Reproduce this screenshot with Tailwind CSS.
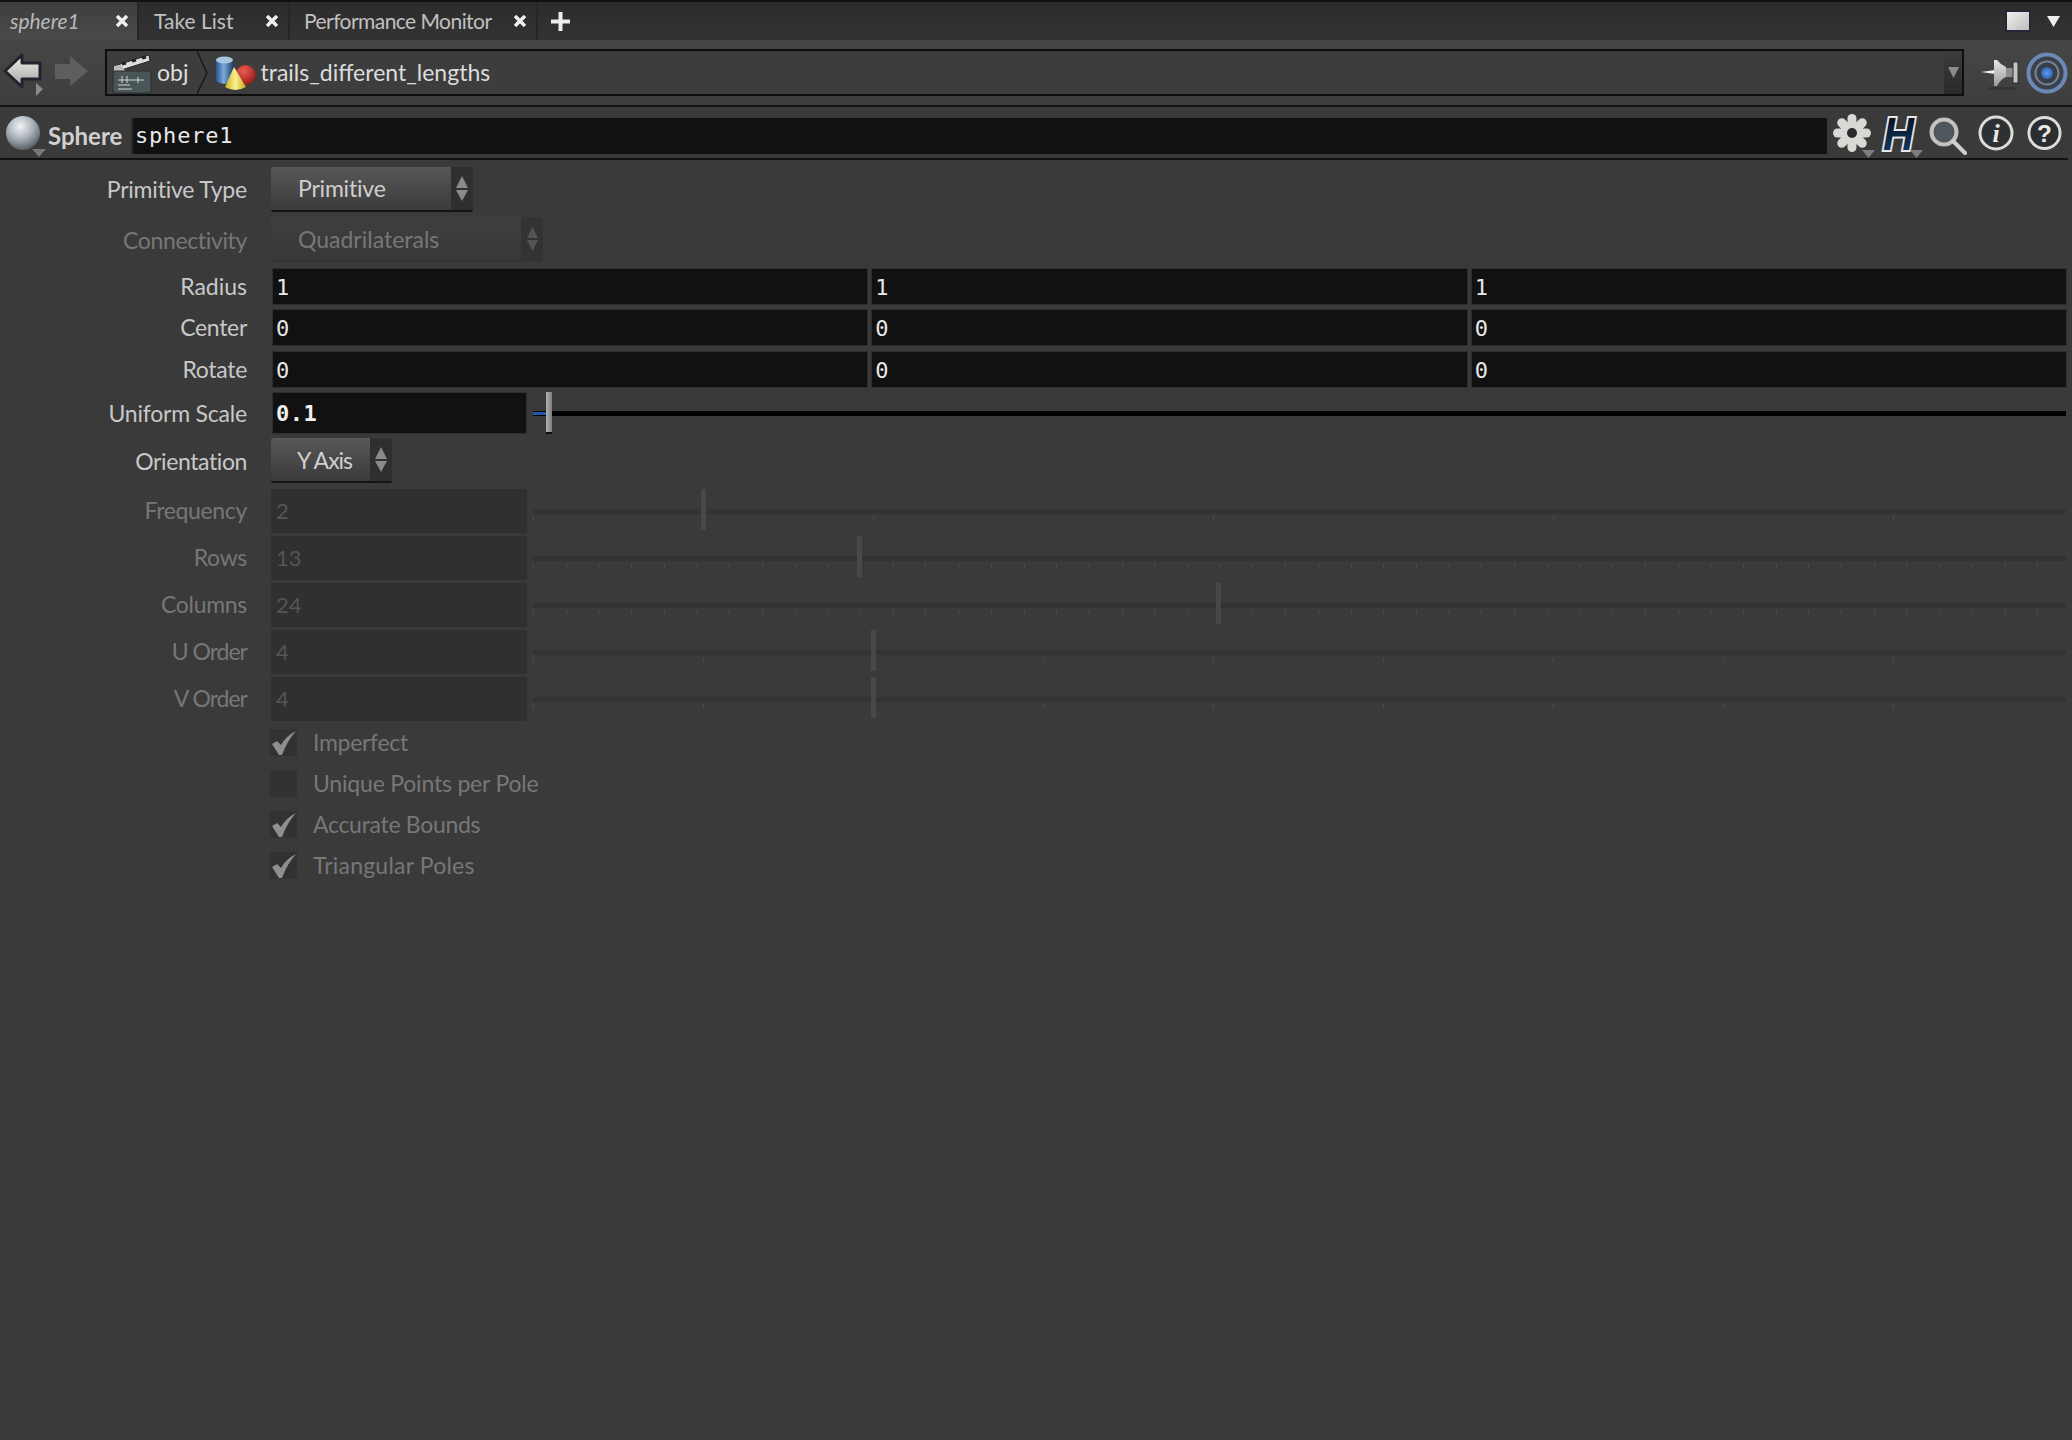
<!DOCTYPE html>
<html lang="en">
<head>
    <meta charset="UTF-8">
    <title>Sphere parameters</title>
    <script src="https://cdn.jsdelivr.net/npm/@tailwindcss/browser@4"></script>
</head>
<body class="bg-[#3a3a3a] text-[#cfcfcf] font-['Lato',sans-serif] text-[23px] h-[1440px] w-[2072px] overflow-hidden">

    <!-- Tabs -->
    <div class="h-[40px] bg-gradient-to-b from-[#2c2c2c] to-[#333] border-t-2 border-[#111] flex items-stretch">
        <div class="w-[139px] bg-gradient-to-b from-[#3e3e3e] to-[#4a4a4a] flex items-center justify-between pl-[10px] pr-[9px] border-r-2 border-[#262626]">
            <span class="italic text-[#b8b8b8] text-[21px]">sphere1</span>
            <svg width="12" height="12" viewBox="0 0 12 12"><path d="M1 1l10 10M11 1l-10 10" stroke="#eee" stroke-width="3.500"/></svg>
        </div>
        <div class="w-[151px] flex items-center justify-between pl-[15px] pr-[10px] border-r-2 border-[#262626]">
            <span class="text-[#c0c0c0] text-[21px]">Take List</span>
            <svg width="12" height="12" viewBox="0 0 12 12"><path d="M1 1l10 10M11 1l-10 10" stroke="#eee" stroke-width="3.500"/></svg>
        </div>
        <div class="w-[248px] flex items-center justify-between pl-[14px] pr-[10px] border-r-2 border-[#262626]">
            <span class="text-[#c0c0c0] text-[21px] tracking-[-0.55px] whitespace-nowrap">Performance Monitor</span>
            <svg width="12" height="12" viewBox="0 0 12 12"><path d="M1 1l10 10M11 1l-10 10" stroke="#eee" stroke-width="3.500"/></svg>
        </div>
        <div class="w-[44px] flex items-center justify-center">
            <svg width="19" height="19" viewBox="0 0 19 19"><path d="M9.500 0v19M0 9.500h19" stroke="#eee" stroke-width="4"/></svg>
        </div>
        <div class="flex-1 flex items-center justify-end pr-[12px] gap-[18px]">
            <div class="w-[22px] h-[18px] bg-gradient-to-br from-[#f0f0ee] to-[#bdbdbb] outline-2 outline-[#26263a]"></div>
            <svg width="13" height="11" viewBox="0 0 13 11"><path d="M0 0h13L6.500 11z" fill="#eee"/></svg>
        </div>
    </div>

    <!-- Path bar -->
    <div class="h-[67px] bg-gradient-to-b from-[#464646] to-[#3e3e3e] border-b-2 border-[#141414] flex items-center pl-[3px] pr-[4px]">
        <svg width="100" height="46" viewBox="0 0 100 46" class="shrink-0 mt-[4px]">
            <defs>
                <linearGradient id="back" x1="0" x2="0" y1="0" y2="1"><stop offset="0" stop-color="#f0f0ec"/><stop offset="1" stop-color="#a4a4a0"/></linearGradient>
            </defs>
            <path d="M2 19 L19 3 V11 H37 V27 H19 V35 Z" fill="url(#back)" stroke="#23232f" stroke-width="3" stroke-linejoin="round"/>
            <path d="M33 31 L40 37 L33 44 Z" fill="#8a8a8a"/>
            <path d="M52 12 H67 V4 L85 19 L67 34 V27 H52 Z" fill="#5e5e5e"/>
        </svg>
        <div class="w-[1859px] h-[47px] ml-[2px] border-2 border-[#0e0e0e] bg-[#3d3d3d] flex items-center shrink-0">
            <svg width="40" height="42" viewBox="0 0 40 42" class="ml-[5px] shrink-0">
                <path d="M2 14 L37 3 L38 9 L3 20 Z" fill="#ddd" stroke="#222"/>
                <path d="M10 12 L14 11 M20 9 L24 8 M30 6 L34 5" stroke="#222" stroke-width="3"/>
                <path d="M2 14 L9 13 L14 20 H2 Z" fill="#bbb"/>
                <rect x="1" y="19" width="38" height="22" rx="2" fill="#4a5557" stroke="#2a2e30"/>
                <path d="M6 28h26M6 33h12M6 37h14M10 24v7M15 24v7M26 25v6" stroke="#cfd5d5" stroke-width="1"/>
            </svg>
            <span class="ml-[5px] text-[#dcdcdc]">obj</span>
            <svg width="12" height="43" viewBox="0 0 12 43" class="ml-[9px] shrink-0">
                <path d="M0 0 L10 22 L0 43" fill="none" stroke="#191919" stroke-width="1.500"/>
            </svg>
            <svg width="40" height="34" viewBox="0 0 40 34" class="ml-[7px] shrink-0">
                <defs>
                    <linearGradient id="cyl" x1="0" x2="1" y1="0" y2="0"><stop offset="0" stop-color="#24568f"/><stop offset=".45" stop-color="#7ca9d8"/><stop offset="1" stop-color="#1d4270"/></linearGradient>
                    <radialGradient id="ball" cx=".4" cy=".3" r=".8"><stop offset="0" stop-color="#ee5c50"/><stop offset="1" stop-color="#8c1612"/></radialGradient>
                    <linearGradient id="cone" x1="0" x2="1" y1="0" y2="0"><stop offset="0" stop-color="#c9b21d"/><stop offset=".5" stop-color="#fbf090"/><stop offset="1" stop-color="#c7a91a"/></linearGradient>
                </defs>
                <path d="M0 4 Q8 -2 17 4 V25 Q8 31 0 25 Z" fill="url(#cyl)"/>
                <ellipse cx="8.500" cy="4" rx="8.500" ry="3.500" fill="#a8c5e2"/>
                <circle cx="29.500" cy="19" r="10" fill="url(#ball)"/>
                <path d="M18 11 L30 31 Q19 37 9 31 Z" fill="url(#cone)"/>
            </svg>
            <span class="ml-[4px] text-[#dcdcdc]">trails_different_lengths</span>
            <div class="ml-auto w-[18px] h-full bg-gradient-to-b from-[#3c3c3c] to-[#2a2a2a] flex items-center justify-center">
                <svg width="11" height="11" viewBox="0 0 11 11"><path d="M0 0h11L5.500 11z" fill="#8c8c8c"/></svg>
            </div>
        </div>
        <svg width="38" height="32" viewBox="0 0 38 32" class="ml-[17px] shrink-0 mt-[4px]">
            <defs><linearGradient id="pin" x1="0" x2="0" y1="0" y2="1"><stop offset="0" stop-color="#e4e4e2"/><stop offset="1" stop-color="#9c9c9a"/></linearGradient></defs>
            <path d="M0 13 L14 11 L14 15 Z" fill="#f0f0f0"/>
            <path d="M13 1 L16 1 Q20 6 25 8 V18 Q20 20 16 27 L13 27 Z" fill="url(#pin)"/>
            <rect x="25" y="9" width="7" height="9" fill="#8e8e8c"/>
            <rect x="32" y="3" width="5" height="21" fill="#c4c4c2" stroke="#333" stroke-width="1"/>
            <rect x="8" y="28" width="28" height="3" fill="#353535"/>
        </svg>
        <svg width="42" height="42" viewBox="0 0 42 42" class="ml-[7px] shrink-0">
            <defs><radialGradient id="dot" cx=".5" cy=".5" r=".5"><stop offset="0" stop-color="#5d9bec"/><stop offset="1" stop-color="#2f66b4"/></radialGradient></defs>
            <circle cx="21" cy="21" r="18.500" fill="#3c4048" stroke="#6a8ab5" stroke-width="4"/>
            <circle cx="21" cy="21" r="11.500" fill="#3a3e44" stroke="#71849e" stroke-width="2"/>
            <circle cx="21" cy="21" r="6" fill="url(#dot)"/>
        </svg>
    </div>

    <!-- Node name bar -->
    <div class="h-[53px] pt-[6px] border-b-2 border-[#111] mr-[4px] flex items-center pl-[6px]">
        <div class="relative w-[34px] h-[42px] shrink-0">
            <svg width="34" height="36" viewBox="0 0 34 36">
                <defs><radialGradient id="sph" cx=".42" cy=".3" r=".75"><stop offset="0" stop-color="#f2f4f6"/><stop offset=".5" stop-color="#a9b1b8"/><stop offset="1" stop-color="#4c5258"/></radialGradient></defs>
                <circle cx="17" cy="18" r="17" fill="url(#sph)"/>
            </svg>
            <svg width="14" height="8" viewBox="0 0 14 8" class="absolute left-[26px] top-[34px]"><path d="M0 0h14L7 8z" fill="#777"/></svg>
        </div>
        <span class="ml-[8px] w-[83px] shrink-0 font-bold text-[24px] text-[#d0d0d0]">Sphere</span>
        <div class="w-[1696px] h-[36px] bg-[#111] border-l-2 border-[#2a2a2a] font-['DejaVu_Sans_Mono',monospace] text-[22px] tracking-[0.8px] text-[#e8e8e8] flex items-center pl-[2px] shrink-0">sphere1</div>
        <!-- gear -->
        <svg width="42" height="44" viewBox="0 0 42 44" class="ml-[6px] shrink-0">
            <g fill="#d8d8d4" transform="translate(19 19)">
                <rect x="-4.500" y="-19" width="9" height="38" rx="4.500"/>
                <rect x="-4.500" y="-19" width="9" height="38" rx="4.500" transform="rotate(45)"/>
                <rect x="-4.500" y="-19" width="9" height="38" rx="4.500" transform="rotate(90)"/>
                <rect x="-4.500" y="-19" width="9" height="38" rx="4.500" transform="rotate(135)"/>
                <circle r="10"/>
                <circle r="5" fill="#2a2a2a"/>
            </g>
            <path d="M29 36h13l-6.500 8z" fill="#7d7d7d"/>
        </svg>
        <!-- H -->
        <svg width="42" height="44" viewBox="0 0 42 44" class="ml-[6px] shrink-0">
            <defs><linearGradient id="hg" x1="0" x2="0" y1="0" y2="1"><stop offset="0" stop-color="#060a14"/><stop offset="1" stop-color="#12406f"/></linearGradient></defs>
            <text x="2" y="36" font-family="Liberation Sans" font-weight="700" font-style="italic" font-size="46" fill="url(#hg)" stroke="#e8e8e8" stroke-width="4" paint-order="stroke" textLength="31" lengthAdjust="spacingAndGlyphs">H</text>
            <path d="M29 36h13l-6.500 8z" fill="#7d7d7d"/>
        </svg>
        <!-- magnifier -->
        <svg width="38" height="38" viewBox="0 0 38 38" class="ml-[6px] shrink-0">
            <circle cx="15" cy="15" r="12.500" fill="#4f565c" stroke="#c2c2bc" stroke-width="4"/>
            <path d="M24 24 L36 36" stroke="#cfcfca" stroke-width="4" stroke-linecap="round"/>
        </svg>
        <!-- info -->
        <svg width="36" height="36" viewBox="0 0 36 36" class="ml-[11px] mb-[6px] shrink-0">
            <circle cx="18" cy="18" r="16" fill="#2d3133" stroke="#dcdcd8" stroke-width="3"/>
            <text x="18" y="27" text-anchor="middle" font-family="Liberation Serif" font-style="italic" font-weight="700" font-size="26" fill="#e8e8e4">i</text>
        </svg>
        <!-- help -->
        <svg width="35" height="36" viewBox="0 0 36 36" class="ml-[13px] mb-[6px] shrink-0">
            <circle cx="18" cy="18" r="16" fill="#2a2e30" stroke="#dcdcd8" stroke-width="3"/>
            <text x="18" y="27" text-anchor="middle" font-family="Liberation Sans" font-weight="700" font-size="25" fill="#e8e8e4">?</text>
        </svg>
    </div>

    <!-- Parameters -->
    <div class="pt-[7px]">

        <div class="flex items-center h-[45px]">
            <label class="w-[247px] text-right shrink-0 tracking-[-0.2px] text-[#c8c8c8]">Primitive Type</label>
            <div class="ml-[24px] w-[202px] h-[45px] bg-gradient-to-b from-[#585858] to-[#3a3a3a] border-b-2 border-[#141414] flex items-center justify-between pl-[27px] rounded-[2px] tracking-[-0.2px]">
                <span>Primitive</span>
                <div class="w-[22px] h-full bg-[#2f2f2f] flex flex-col items-center justify-center gap-[2px]">
                    <svg width="12" height="12" viewBox="0 0 12 12"><path d="M6 0L12 12H0z" fill="#8a8a8a"/></svg>
                    <svg width="12" height="11" viewBox="0 0 12 11"><path d="M0 0h12L6 11z" fill="#8a8a8a"/></svg>
                </div>
            </div>
        </div>

        <div class="flex items-center h-[45px] mt-[5px]">
            <label class="w-[247px] text-right shrink-0 pt-[1px] tracking-[-0.35px] text-[#777]">Connectivity</label>
            <div class="ml-[24px] w-[272px] h-[45px] bg-gradient-to-b from-[#3f3f3f] to-[#383838] border-b-2 border-[#333] flex items-center justify-between pl-[27px] text-[#777]">
                <span class="pt-[2px]">Quadrilaterals</span>
                <div class="w-[22px] h-full bg-[#333] flex flex-col items-center justify-center gap-[2px]">
                    <svg width="11" height="11" viewBox="0 0 11 11"><path d="M5.500 0L11 11H0z" fill="#555"/></svg>
                    <svg width="11" height="11" viewBox="0 0 11 11"><path d="M0 0h11L5.500 11z" fill="#555"/></svg>
                </div>
            </div>
        </div>

        <div class="flex items-center h-[37px] mt-[6px]">
            <label class="w-[247px] text-right shrink-0 text-[#c8c8c8]">Radius</label>
            <div class="ml-[25px] flex-1 flex gap-[3px] pr-[5px] font-['DejaVu_Sans_Mono',monospace] text-[22px] text-[#e8e8e8]">
                <div class="flex-1 h-[37px] bg-[#111] border border-[#2e2e2e] flex items-center pl-[3px] pt-[1px]">1</div>
                <div class="flex-1 h-[37px] bg-[#111] border border-[#2e2e2e] flex items-center pl-[3px] pt-[1px]">1</div>
                <div class="flex-1 h-[37px] bg-[#111] border border-[#2e2e2e] flex items-center pl-[3px] pt-[1px]">1</div>
            </div>
        </div>
        <div class="flex items-center h-[37px] mt-[4px]">
            <label class="w-[247px] text-right shrink-0 tracking-[-0.3px] text-[#c8c8c8]">Center</label>
            <div class="ml-[25px] flex-1 flex gap-[3px] pr-[5px] font-['DejaVu_Sans_Mono',monospace] text-[22px] text-[#e8e8e8]">
                <div class="flex-1 h-[37px] bg-[#111] border border-[#2e2e2e] flex items-center pl-[3px] pt-[1px]">0</div>
                <div class="flex-1 h-[37px] bg-[#111] border border-[#2e2e2e] flex items-center pl-[3px] pt-[1px]">0</div>
                <div class="flex-1 h-[37px] bg-[#111] border border-[#2e2e2e] flex items-center pl-[3px] pt-[1px]">0</div>
            </div>
        </div>
        <div class="flex items-center h-[37px] mt-[5px]">
            <label class="w-[247px] text-right shrink-0 tracking-[-0.3px] text-[#c8c8c8]">Rotate</label>
            <div class="ml-[25px] flex-1 flex gap-[3px] pr-[5px] font-['DejaVu_Sans_Mono',monospace] text-[22px] text-[#e8e8e8]">
                <div class="flex-1 h-[37px] bg-[#111] border border-[#2e2e2e] flex items-center pl-[3px] pt-[1px]">0</div>
                <div class="flex-1 h-[37px] bg-[#111] border border-[#2e2e2e] flex items-center pl-[3px] pt-[1px]">0</div>
                <div class="flex-1 h-[37px] bg-[#111] border border-[#2e2e2e] flex items-center pl-[3px] pt-[1px]">0</div>
            </div>
        </div>

        <div class="flex items-center h-[42px] mt-[4px]">
            <label class="w-[247px] text-right shrink-0 tracking-[-0.2px] text-[#c8c8c8]">Uniform Scale</label>
            <div class="ml-[25px] w-[255px] h-[42px] bg-[#111] border border-[#2e2e2e] flex items-center pl-[3px] font-['DejaVu_Sans_Mono',monospace] font-bold text-[22px] tracking-[0.5px] text-[#f0f0f0]">0.1</div>
            <div class="relative ml-[6px] w-[1533px] h-[5px] bg-black">
                <div class="absolute left-0 top-[1px] w-[13px] h-[3px] bg-[#1f5aa8]"></div>
                <div class="absolute left-[13px] top-[-19px] w-[6px] h-[42px] bg-gradient-to-r from-[#b0b0b0] to-[#808080] border-b-2 border-[#111]"></div>
            </div>
        </div>

        <div class="flex items-center h-[45px] mt-[4px]">
            <label class="w-[247px] text-right shrink-0 pt-[1px] tracking-[-0.4px] text-[#c8c8c8]">Orientation</label>
            <div class="ml-[24px] w-[121px] h-[45px] bg-gradient-to-b from-[#585858] to-[#3a3a3a] border-b-2 border-[#141414] flex items-center justify-between pl-[26px] rounded-[2px] tracking-[-1px]">
                <span class="pt-[1px]">Y Axis</span>
                <div class="w-[22px] h-full bg-[#2f2f2f] flex flex-col items-center justify-center gap-[2px]">
                    <svg width="12" height="12" viewBox="0 0 12 12"><path d="M6 0L12 12H0z" fill="#8a8a8a"/></svg>
                    <svg width="12" height="11" viewBox="0 0 12 11"><path d="M0 0h12L6 11z" fill="#8a8a8a"/></svg>
                </div>
            </div>
        </div>

        <!-- filled in by renderSliders -->
        <div id="sliders" class="flex flex-col gap-[3px] mt-[6px]"></div>

        <div class="mt-[8px] ml-[270px] flex flex-col gap-[14px] text-[#777]">
            <div class="flex items-center h-[27px]">
                <div class="w-[27px] h-[27px] bg-[#323232] flex items-center justify-center">
                    <svg width="25" height="24" viewBox="0 0 25 24"><path d="M1 13 L6 10 L10 14 Q15 5 25 0 Q16 10 11 24 L8 24 Z" fill="#8f8f8f"/></svg>
                </div>
                <span class="ml-[16px] tracking-[-0.3px]">Imperfect</span>
            </div>
            <div class="flex items-center h-[27px]">
                <div class="w-[27px] h-[27px] bg-[#323232]"></div>
                <span class="ml-[16px] tracking-[-0.2px]">Unique Points per Pole</span>
            </div>
            <div class="flex items-center h-[27px]">
                <div class="w-[27px] h-[27px] bg-[#323232] flex items-center justify-center">
                    <svg width="25" height="24" viewBox="0 0 25 24"><path d="M1 13 L6 10 L10 14 Q15 5 25 0 Q16 10 11 24 L8 24 Z" fill="#8f8f8f"/></svg>
                </div>
                <span class="ml-[16px] tracking-[-0.3px]">Accurate Bounds</span>
            </div>
            <div class="flex items-center h-[27px]">
                <div class="w-[27px] h-[27px] bg-[#323232] flex items-center justify-center">
                    <svg width="25" height="24" viewBox="0 0 25 24"><path d="M1 13 L6 10 L10 14 Q15 5 25 0 Q16 10 11 24 L8 24 Z" fill="#8f8f8f"/></svg>
                </div>
                <span class="ml-[16px] tracking-[0.2px]">Triangular Poles</span>
            </div>
        </div>
    </div>

    <script>
        // Disabled integer sliders: tick spacing and handle position in pixels from the track start
        const sliders = [
            { name: 'Frequency', value: '2', step: 340, handle: 168, spacing: '-0.35px' },
            { name: 'Rows', value: '13', step: 32.7, handle: 324, spacing: '-0.3px' },
            { name: 'Columns', value: '24', step: 32.7, handle: 683, spacing: '-0.3px' },
            { name: 'U Order', value: '4', step: 170, handle: 338, spacing: '-1px' },
            { name: 'V Order', value: '4', step: 170, handle: 338, spacing: '-1px' },
        ];

        function renderSliders() {
            const container = document.getElementById('sliders');
            sliders.forEach((s) => {
                let ticks = '';
                for (let x = 0; x < 1530; x += s.step) {
                    ticks += `<div class="absolute top-[7px] w-[1px] h-[5px] bg-[#4a4a4a]" style="left:${x}px"></div>`;
                }
                const row = document.createElement('div');
                row.className = 'flex items-center h-[44px]';
                row.innerHTML = `
                    <label class="w-[247px] text-right shrink-0 pb-[2px] text-[#777]" style="letter-spacing:${s.spacing}">${s.name}</label>
                    <div class="ml-[24px] w-[256px] h-[44px] bg-[#303030] flex items-center pl-[5px] pb-[2px] text-[#555] text-[22px]">${s.value}</div>
                    <div class="relative ml-[6px] w-[1533px] h-[5px] bg-[#333]">
                        ${ticks}
                        <div class="absolute top-[-20px] w-[5px] h-[41px] bg-[#484848]" style="left:${s.handle}px"></div>
                    </div>`;
                container.appendChild(row);
            });
        }

        renderSliders();
    </script>
</body>
</html>
